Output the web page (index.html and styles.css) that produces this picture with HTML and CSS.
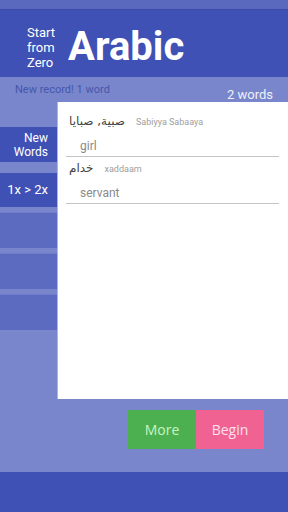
FILE: index.html
```html
<!DOCTYPE html>
<html lang="en">
<head>
  <meta charset="UTF-8">
  <meta name="viewport" content="width=device-width, initial-scale=1.0">
  <title>Start from Zero Arabic</title>
  <link rel="stylesheet" href="styles.css">
</head>
<body>
  <div class="status"></div>

  <div class="header">
    <div class="tagline">Start<br>from<br>Zero</div>
    <div class="title">Arabic</div>
  </div>

  <div class="info">
    <span class="record">New record! 1 word</span>
    <span class="count">2 words</span>
  </div>

  <div class="main">
    <div class="sidebar">
      <div class="item active first">New<br>Words</div>
      <div class="item active wide">1x &gt; 2x</div>
      <div class="item"></div>
      <div class="item"></div>
      <div class="item"></div>
    </div>

    <div class="card">
      <div class="word">
        <div class="top">
          <span class="arabic">صبية, صبايا</span>
          <span class="translit">Sabiyya Sabaaya</span>
        </div>
        <div class="meaning">girl</div>
      </div>
      <div class="word">
        <div class="top">
          <span class="arabic">خدام</span>
          <span class="translit">xaddaam</span>
        </div>
        <div class="meaning">servant</div>
      </div>
    </div>
  </div>

  <div class="actions">
    <button class="btn more">More</button>
    <button class="btn begin">Begin</button>
  </div>

  <div class="footer"></div>
</body>
</html>
```

FILE: styles.css
```css
body {
  margin: 0;
  width: 288px;
  height: 512px;
  overflow: hidden;
  background-color: #7986cb;
  font-family: Roboto, "DejaVu Sans", sans-serif;
  display: flex;
  flex-direction: column;
}
.status {
  height: 9px;
  background-color: #5a68be;
  border-bottom: 1px solid #3949a8;
}
.header {
  height: 67px;
  background-color: #3f51b5;
  display: flex;
  align-items: center;
}
.tagline {
  color: #fff;
  font-size: 13px;
  line-height: 15px;
  margin-left: 27px;
  margin-top: 7px;
}
.title {
  color: #fff;
  font-size: 40px;
  font-weight: bold;
  margin-left: 13px;
  margin-top: 6px;
}
.info {
  height: 25px;
  display: flex;
  justify-content: space-between;
  align-items: flex-start;
}
.record {
  color: #4656ac;
  font-size: 11px;
  margin-left: 15px;
  margin-top: 6px;
}
.count {
  color: #eef0fa;
  font-size: 13px;
  margin-right: 15px;
  margin-top: 10px;
}
.main {
  height: 297px;
  display: flex;
}
.sidebar {
  width: 57px;
  padding-top: 25px;
  border-right: 1px solid #a9b4ee;
  display: flex;
  flex-direction: column;
  gap: 5px;
}
.item {
  height: 36px;
  background-color: #5c6bc0;
  border-top: 1px solid #6f7dcc;
  color: #fff;
  font-size: 12px;
  line-height: 14px;
  text-align: right;
  padding-right: 9px;
  display: flex;
  align-items: center;
  justify-content: flex-end;
  box-sizing: border-box;
}
.item.active {
  background-color: #3f51b5;
  border-top: none;
  height: 34px;
}
.item.first {
  height: 35px;
  margin-bottom: 6px;
}
.item.wide {
  font-size: 13px;
}
.card {
  flex: 1;
  background-color: #fff;
  padding: 8px 9px 0 8px;
}
.word {
  height: 46px;
  border-bottom: 1px solid #c4c4c4;
  padding-left: 3px;
}
.top {
  height: 24px;
  display: flex;
  align-items: baseline;
  padding-top: 4px;
}
.arabic {
  font-family: "DejaVu Sans", sans-serif;
  font-size: 12px;
  color: #444;
}
.translit {
  font-size: 9px;
  color: #9e9e9e;
  margin-left: 11px;
}
.meaning {
  font-size: 12px;
  color: #8a8a8a;
  padding-left: 11px;
  line-height: 16px;
}
.actions {
  height: 73px;
  display: flex;
  justify-content: flex-end;
  align-items: flex-start;
  padding-top: 11px;
  padding-right: 24px;
  box-sizing: border-box;
}
.btn {
  width: 68px;
  height: 39px;
  border: none;
  font-family: "Open Sans", sans-serif;
  font-size: 14px;
  padding: 0;
}
.more {
  background-color: #4caf50;
  color: #c9f5c4;
}
.begin {
  background-color: #f06292;
  color: #fde1ec;
}
.footer {
  flex: 1;
  background-color: #3f51b5;
}
```
